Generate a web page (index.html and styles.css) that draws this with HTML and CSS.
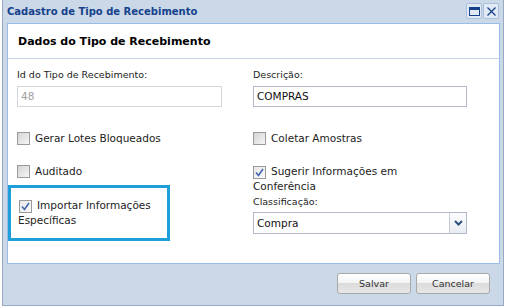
FILE: index.html
```html
<!DOCTYPE html>
<html lang="pt">
<head>
<meta charset="utf-8">
<title>Cadastro de Tipo de Recebimento</title>
<link rel="stylesheet" href="styles.css">
</head>
<body>
<div class="window">
  <div class="titlebar">
    <span class="title">Cadastro de Tipo de Recebimento</span>
    <div class="tools">
      <span class="tool"><svg width="11" height="9" viewBox="0 0 11 9"><rect x="0.5" y="0.5" width="10" height="8" fill="none" stroke="#15428b"/><rect x="0" y="0" width="11" height="3" fill="#15428b"/></svg></span>
      <span class="tool"><svg width="11" height="11" viewBox="0 0 11 11"><path d="M1.5 1.5 L9.5 9.5 M9.5 1.5 L1.5 9.5" stroke="#15428b" stroke-width="1.3" fill="none"/></svg></span>
    </div>
  </div>
  <div class="panel">
    <div class="panel-header">Dados do Tipo de Recebimento</div>
    <div class="panel-body">
      <div class="col col-left">
        <label class="field-label">Id do Tipo de Recebimento:</label>
        <div class="input input-disabled">48</div>
        <div class="check-row row-first"><span class="cb"></span><span class="cb-text">Gerar Lotes Bloqueados</span></div>
        <div class="check-row row-second"><span class="cb"></span><span class="cb-text">Auditado</span></div>
        <div class="highlight">
          <div class="check-wrap"><span class="cb cb-inline checked"><svg width="9" height="9" viewBox="0 0 9 9"><path d="M1 4.5 L3.5 7.5 L8 1" stroke="#4466b0" stroke-width="1.6" fill="none"/></svg></span>Importar Informações Específicas</div>
        </div>
      </div>
      <div class="col col-right">
        <label class="field-label">Descrição:</label>
        <div class="input">COMPRAS</div>
        <div class="check-row row-first"><span class="cb"></span><span class="cb-text">Coletar Amostras</span></div>
        <div class="check-wrap sugerir"><span class="cb cb-inline checked"><svg width="9" height="9" viewBox="0 0 9 9"><path d="M1 4.5 L3.5 7.5 L8 1" stroke="#4466b0" stroke-width="1.6" fill="none"/></svg></span>Sugerir Informações em Conferência</div>
        <label class="field-label label-class">Classificação:</label>
        <div class="combo">
          <span class="combo-text">Compra</span>
          <span class="combo-trigger"><svg width="9" height="6" viewBox="0 0 9 6"><path d="M1 1 L4.5 4.5 L8 1" stroke="#2c4f80" stroke-width="2" fill="none"/></svg></span>
        </div>
      </div>
    </div>
  </div>
  <div class="footer">
    <button class="btn">Salvar</button>
    <button class="btn">Cancelar</button>
  </div>
</div>
</body>
</html>
```
FILE: styles.css
```css
html, body {
  margin: 0;
  padding: 0;
  background: #ffffff;
}
body {
  font-family: "DejaVu Sans", Verdana, sans-serif;
  color: #000;
}
.window {
  margin-left: 2px;
  width: 502px;
  height: 306px;
  box-sizing: border-box;
  border: 1px solid #98a9c2;
  border-top: none;
  background: #cbd8e8;
  display: flex;
  flex-direction: column;
}
.titlebar {
  height: 23px;
  display: flex;
  align-items: center;
  justify-content: space-between;
  padding-left: 4px;
  padding-right: 4px;
  box-sizing: border-box;
}
.title {
  font-weight: bold;
  font-size: 10px;
  color: #15428b;
  margin-top: -1px;
}
.tools {
  display: flex;
  gap: 1px;
  margin-top: -1px;
}
.tool {
  width: 14px;
  height: 14px;
  border: 1px solid #a9bfdc;
  background: #e1e9f4;
  border-radius: 2px;
  display: flex;
  align-items: center;
  justify-content: center;
}
.panel {
  margin: 0 3px 0 4px;
  height: 241px;
  box-sizing: border-box;
  border: 1px solid #99bbe8;
  background: #fff;
  display: flex;
  flex-direction: column;
}
.panel-header {
  height: 35px;
  box-sizing: border-box;
  border-bottom: 1px solid #c5d3e6;
  padding-left: 10px;
  display: flex;
  align-items: center;
  font-weight: bold;
  font-size: 11px;
  color: #000;
}
.panel-body {
  display: flex;
  padding-left: 9px;
  gap: 31px;
}
.col {
  display: flex;
  flex-direction: column;
}
.col-left {
  width: 205px;
}
.col-right {
  width: 214px;
}
.field-label {
  font-size: 9.5px;
  line-height: 14px;
  height: 14px;
  margin-top: 9px;
  color: #222;
}
.input {
  margin-top: 4px;
  height: 21px;
  box-sizing: border-box;
  border: 1px solid #b5b8c8;
  background: #fff;
  font-size: 10.5px;
  line-height: 19px;
  padding-left: 3px;
  color: #111;
}
.input-disabled {
  border-color: #d3d6dc;
  color: #a0a0a0;
}
.check-row {
  display: flex;
  align-items: center;
  height: 14px;
  font-size: 10.5px;
  color: #222;
}
.row-first {
  margin-top: 24px;
}
.row-second {
  margin-top: 19px;
}
.cb {
  width: 11px;
  height: 11px;
  border: 1px solid #9a9a9a;
  background: linear-gradient(135deg, #d4d4d4, #f6f6f6);
  display: inline-flex;
  align-items: center;
  justify-content: center;
  flex: none;
  margin-right: 5px;
}
.cb.checked {
  background: linear-gradient(135deg, #e8e8e8, #fafafa);
}
.cb-inline {
  vertical-align: -2px;
}
.highlight {
  margin-top: 7px;
  margin-left: -9px;
  width: 162px;
  height: 56px;
  box-sizing: border-box;
  border: 3px solid #1e9fda;
  padding: 10px 6px 0 7px;
}
.check-wrap {
  font-size: 10.5px;
  line-height: 15px;
  color: #222;
}
.highlight .cb-inline {
  margin-left: 1px;
}
.sugerir {
  margin-top: 19px;
  line-height: 14px;
  width: 180px;
}
.label-class {
  margin-top: 2px;
}
.combo {
  margin-top: 3px;
  height: 22px;
  display: flex;
  box-sizing: border-box;
  border: 1px solid #b5b8c8;
  background: #fff;
}
.combo-text {
  flex: 1;
  font-size: 10.5px;
  line-height: 20px;
  padding-left: 3px;
  color: #111;
}
.combo-trigger {
  width: 16px;
  border-left: 1px solid #c8ccd6;
  background: linear-gradient(#fbfcfd, #e8ecf2);
  display: flex;
  align-items: center;
  justify-content: center;
}
.footer {
  display: flex;
  justify-content: flex-end;
  gap: 5px;
  padding-top: 9px;
  padding-right: 13px;
}
.btn {
  width: 74px;
  height: 21px;
  box-sizing: border-box;
  border: 1px solid #a8a8a8;
  border-radius: 3px;
  background: linear-gradient(#ffffff 0%, #f4f4f4 45%, #dcdcdc 50%, #e6e6e6 100%);
  font-family: "DejaVu Sans", Verdana, sans-serif;
  font-size: 9.5px;
  color: #333;
  padding: 0;
}
```
